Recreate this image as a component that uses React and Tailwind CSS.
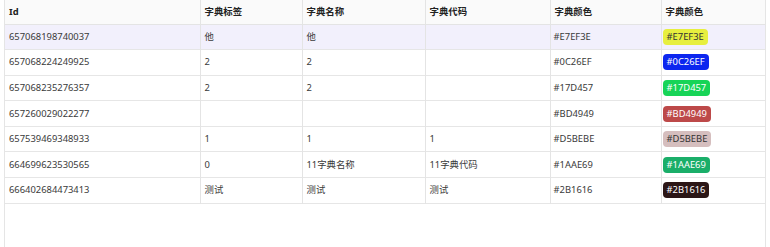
const ROWS = [
  { id: '657068198740037', label: '他', name: '他', code: '', color: '#E7EF3E', dark: true },
  { id: '657068224249925', label: '2', name: '2', code: '', color: '#0C26EF' },
  { id: '657068235276357', label: '2', name: '2', code: '', color: '#17D457' },
  { id: '657260029022277', label: '', name: '', code: '', color: '#BD4949' },
  { id: '657539469348933', label: '1', name: '1', code: '1', color: '#D5BEBE', dark: true },
  { id: '664699623530565', label: '0', name: '11字典名称', code: '11字典代码', color: '#1AAE69' },
  { id: '666402684473413', label: '测试', name: '测试', code: '测试', color: '#2B1616' },
]

const HEADERS = ['Id', '字典标签', '字典名称', '字典代码', '字典颜色', '字典颜色']

export default function App() {
  return (
    <div className="w-[770px] h-[247px] bg-white overflow-hidden text-[9.4px] text-[#3a3a3a]" style={{ fontFamily: '"Noto Sans", "Noto Sans CJK SC", sans-serif' }}>
      <div className="ml-[4px] w-[762px] h-[260px] border-x border-[#e5e5e5]">
        <table className="w-full border-collapse table-fixed">
          <colgroup>
            <col className="w-[195px]" />
            <col className="w-[102px]" />
            <col className="w-[123px]" />
            <col className="w-[125px]" />
            <col className="w-[111px]" />
            <col />
          </colgroup>
          <thead>
            <tr className="h-[24px] bg-[#fafafa] border-b border-[#e4e4e4]">
              {HEADERS.map((h, i) => (
                <th key={i} className={`px-[4px] text-left font-bold text-[#222] ${i > 0 ? 'border-l border-[#e4e4e4]' : ''}`}>{h}</th>
              ))}
            </tr>
          </thead>
          <tbody>
            {ROWS.map((r, i) => (
              <tr key={r.id} className={`h-[25.6px] border-b border-[#e6e6e6] ${i === 0 ? 'bg-[#f2f0fc]' : ''}`}>
                <td className="px-[4px]">{r.id}</td>
                <td className="px-[4px] border-l border-[#e4e4e4]">{r.label}</td>
                <td className="px-[4px] border-l border-[#e4e4e4]">{r.name}</td>
                <td className="px-[4px] border-l border-[#e4e4e4]">{r.code}</td>
                <td className="px-[3px] border-l border-[#e4e4e4]">{r.color}</td>
                <td className="px-[1px] border-l border-[#e4e4e4]">
                  <span
                    className={`inline-block rounded-[4px] px-[4px] leading-[16px] ${r.dark ? 'text-[#333]' : 'text-white'}`}
                    style={{ backgroundColor: r.color }}
                  >
                    {r.color}
                  </span>
                </td>
              </tr>
            ))}
          </tbody>
        </table>
      </div>
    </div>
  )
}
